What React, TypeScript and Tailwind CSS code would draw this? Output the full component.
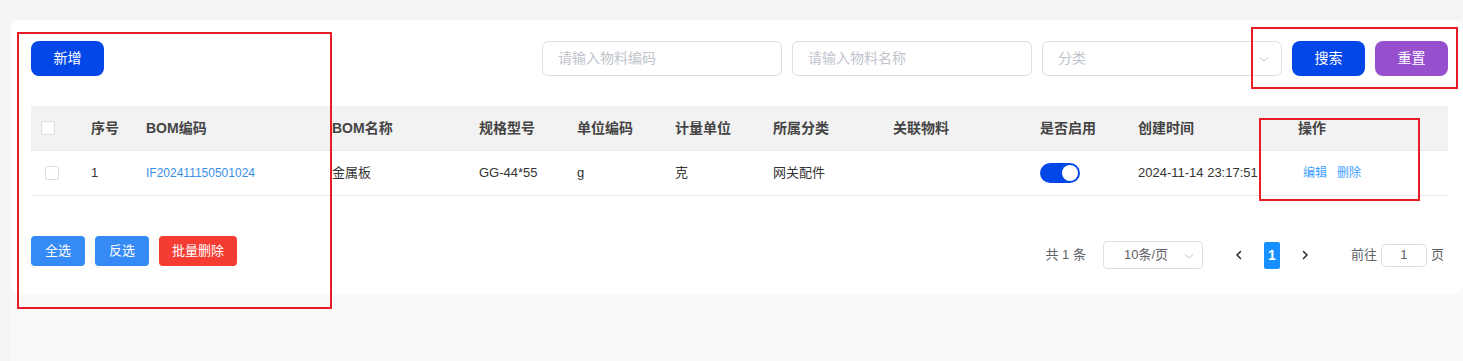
import React from 'react'

const font = { fontFamily: '"Liberation Sans", "Noto Sans CJK SC", sans-serif' }

const cols = [
  { key: 'no', label: '序号', w: 'w-[55px]' },
  { key: 'code', label: 'BOM编码', w: 'w-[186px]' },
  { key: 'name', label: 'BOM名称', w: 'w-[147px]' },
  { key: 'spec', label: '规格型号', w: 'w-[98px]' },
  { key: 'unitCode', label: '单位编码', w: 'w-[98px]' },
  { key: 'unit', label: '计量单位', w: 'w-[98px]' },
  { key: 'cat', label: '所属分类', w: 'w-[120px]' },
  { key: 'rel', label: '关联物料', w: 'w-[147px]' },
  { key: 'on', label: '是否启用', w: 'w-[98px]' },
  { key: 'time', label: '创建时间', w: 'w-[160px]' },
  { key: 'op', label: '操作', w: 'flex-1' },
]

function Chevron({ className }: { className?: string }) {
  return (
    <svg className={className} width="12" height="12" viewBox="0 0 12 12" fill="none">
      <path d="M2 4.5L6 8L10 4.5" stroke="currentColor" strokeWidth="1" strokeLinecap="round" strokeLinejoin="round" />
    </svg>
  )
}

function Checkbox() {
  return <span className="block w-[14px] h-[14px] rounded-[2px] border border-[#dcdfe6] bg-white" />
}

export default function App() {
  return (
    <div className="relative w-[1463px] h-[361px] overflow-hidden bg-[#f4f5f7] pl-[11px] pt-[20px]" style={font}>
      <div className="h-full bg-[#f9f9fa]">
        <div className="bg-white rounded-xl h-[275px] pl-5 pr-[15px] pt-[21px]">
          {/* toolbar */}
          <div className="flex items-center h-[35px]">
            <button className="h-[35px] w-[73px] rounded-lg bg-[#0447e8] text-white text-[14px]">新增</button>
            <div className="flex-1" />
            <div className="flex items-center gap-[10px]">
              <div className="w-[240px] h-[35px] rounded-md border border-[#dcdfe6] flex items-center pl-[15px] text-[14px] text-[#c0c4cc]">请输入物料编码</div>
              <div className="w-[240px] h-[35px] rounded-md border border-[#dcdfe6] flex items-center pl-[15px] text-[14px] text-[#c0c4cc]">请输入物料名称</div>
              <div className="w-[240px] h-[35px] rounded-md border border-[#dcdfe6] flex items-center justify-between pl-[15px] pr-[11px] text-[14px] text-[#c0c4cc]">
                <span>分类</span>
                <Chevron className="text-[#c0c4cc]" />
              </div>
              <button className="h-[35px] w-[73px] rounded-lg bg-[#0447e8] text-white text-[14px]">搜索</button>
              <button className="h-[35px] w-[73px] rounded-lg bg-[#9650cd] text-white text-[14px]">重置</button>
            </div>
          </div>

          {/* table */}
          <div className="mt-[30px]">
            <div className="flex items-center h-[45px] bg-[#f2f2f2] border-b border-[#e4e8ef] text-[14px] font-bold text-[#444]">
              <div className="w-[60px] pl-[10px]"><Checkbox /></div>
              {cols.map((c) => (
                <div key={c.key} className={c.w}>{c.label}</div>
              ))}
            </div>
            <div className="flex items-center h-[45px] border-b border-[#e8ebf1] text-[13px] text-[#333]">
              <div className="w-[60px] pl-[14px]"><Checkbox /></div>
              <div className="w-[55px]">1</div>
              <div className="w-[186px] text-[12px] text-[#3a8ee6]">IF202411150501024</div>
              <div className="w-[147px]">金属板</div>
              <div className="w-[98px]">GG-44*55</div>
              <div className="w-[98px]">g</div>
              <div className="w-[98px]">克</div>
              <div className="w-[120px]">网关配件</div>
              <div className="w-[147px]" />
              <div className="w-[98px]">
                <span className="flex items-center justify-end w-[40px] h-[20px] rounded-full bg-[#0447e8] pr-[2px]">
                  <span className="w-[16px] h-[16px] rounded-full bg-white" />
                </span>
              </div>
              <div className="w-[160px]">2024-11-14 23:17:51</div>
              <div className="flex-1 pl-[5px] flex gap-[10px] text-[12px] text-[#409eff]">
                <span>编辑</span>
                <span>删除</span>
              </div>
            </div>
          </div>

          {/* footer */}
          <div className="flex items-center mt-[40px] h-[33px]">
            <div className="flex items-center gap-[10px] self-start">
              <button className="h-[30px] w-[54px] rounded bg-[#368af6] text-white text-[13px]">全选</button>
              <button className="h-[30px] w-[54px] rounded bg-[#368af6] text-white text-[13px]">反选</button>
              <button className="h-[30px] w-[78px] rounded bg-[#f53c33] text-white text-[13px]">批量删除</button>
            </div>
            <div className="flex-1" />
            <div className="flex items-center text-[13px] text-[#606266] pr-[4px] mt-[5px]">
              <span className="mr-[17px]">共 1 条</span>
              <div className="relative w-[100px] h-[28px] rounded border border-[#dcdfe6] flex items-center pl-[20px] text-[#606266]">
                <span>10条/页</span>
                <Chevron className="absolute right-[7px] top-[8px] text-[#c0c4cc]" />
              </div>
              <span className="ml-[29px] w-[14px] flex justify-center text-[#333]">
                <svg width="10" height="12" viewBox="0 0 10 12" fill="none"><path d="M6.5 2.5L3 6L6.5 9.5" stroke="currentColor" strokeWidth="1.6" strokeLinecap="round" strokeLinejoin="round" /></svg>
              </span>
              <span className="ml-[18px] w-[16px] h-[27px] flex items-center justify-center rounded-[2px] bg-[#1890ff] text-white font-bold text-[14px]">1</span>
              <span className="ml-[18px] w-[14px] flex justify-center text-[#333]">
                <svg width="10" height="12" viewBox="0 0 10 12" fill="none"><path d="M3.5 2.5L7 6L3.5 9.5" stroke="currentColor" strokeWidth="1.6" strokeLinecap="round" strokeLinejoin="round" /></svg>
              </span>
              <span className="ml-[39px]">前往</span>
              <div className="ml-[4px] w-[46px] h-[23px] rounded border border-[#dcdfe6] flex items-center justify-center">1</div>
              <span className="ml-[4px]">页</span>
            </div>
          </div>
        </div>
      </div>

      {/* annotation boxes */}
      <div className="absolute left-[17px] top-[32px] w-[315px] h-[277px] border-2 border-[#e81c24]" />
      <div className="absolute left-[1251px] top-[27px] w-[207px] h-[62px] border-2 border-[#e81c24]" />
      <div className="absolute left-[1259px] top-[118px] w-[161px] h-[83px] border-2 border-[#e81c24]" />
    </div>
  )
}
